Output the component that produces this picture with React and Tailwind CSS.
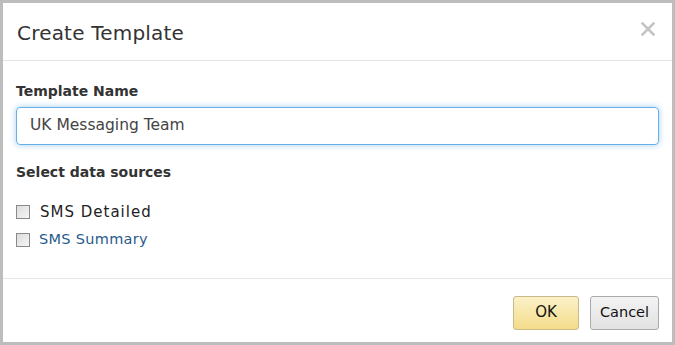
export default function App() {
  return (
    <div className="w-[675px] h-[345px] bg-white border-[3px] border-[#bdbdbd] flex flex-col">
      <div className="h-[58px] flex items-center justify-between pl-[14px] pr-[17px] border-b border-[#e5e5e5] shrink-0">
        <div className="text-[20px] text-[#333] font-['DejaVu_Sans',sans-serif] tracking-[0.2px] pt-[2px]">Create Template</div>
        <svg width="14" height="14" viewBox="0 0 14 14" className="-mt-[6px]">
          <path d="M1.5 1.5 L12.5 12.5 M12.5 1.5 L1.5 12.5" stroke="#c4c4c4" strokeWidth="2.6" strokeLinecap="square" />
        </svg>
      </div>
      <div className="flex-1 flex flex-col pl-[13px] pr-[13px] font-['DejaVu_Sans',sans-serif]">
        <div className="mt-[21px] text-[14px] font-bold text-[#333] leading-[18px]">Template Name</div>
        <div className="mt-[7px] h-[38px] rounded-[4px] border border-[#66afe9] shadow-[0_0_6px_rgba(102,175,233,0.6)] flex items-center pl-[13px] text-[15.5px] text-[#444]">UK Messaging Team</div>
        <div className="mt-[18px] text-[14px] font-bold text-[#333] leading-[18px]">Select data sources</div>
        <div className="mt-[23px] flex items-center gap-[10px] h-[16px]">
          <div className="w-[14px] h-[14px] border border-[#8a8a8a] bg-gradient-to-br from-[#dcdcdc] to-[#f6f6f6]"></div>
          <div className="text-[15px] text-[#222] tracking-[1px]">SMS Detailed</div>
        </div>
        <div className="mt-[12px] flex items-center gap-[9px] h-[16px]">
          <div className="w-[14px] h-[14px] border border-[#8a8a8a] bg-gradient-to-br from-[#dcdcdc] to-[#f6f6f6]"></div>
          <div className="text-[14.5px] text-[#2a5a8c] tracking-[0.3px]">SMS Summary</div>
        </div>
      </div>
      <div className="h-[64px] border-t border-[#e5e5e5] flex items-center justify-end gap-[11px] pr-[13px] pt-[4px] shrink-0 font-['DejaVu_Sans',sans-serif]">
        <div className="w-[66px] h-[34px] rounded-[3px] border border-[#c8b98a] bg-gradient-to-b from-[#fbf1c7] to-[#f4dc8a] flex items-center justify-center text-[15px] text-[#111]">OK</div>
        <div className="w-[69px] h-[34px] rounded-[3px] border border-[#a9a9a9] bg-gradient-to-b from-[#f3f3f3] to-[#e2e2e2] flex items-center justify-center text-[14.5px] text-[#111]">Cancel</div>
      </div>
    </div>
  );
}
